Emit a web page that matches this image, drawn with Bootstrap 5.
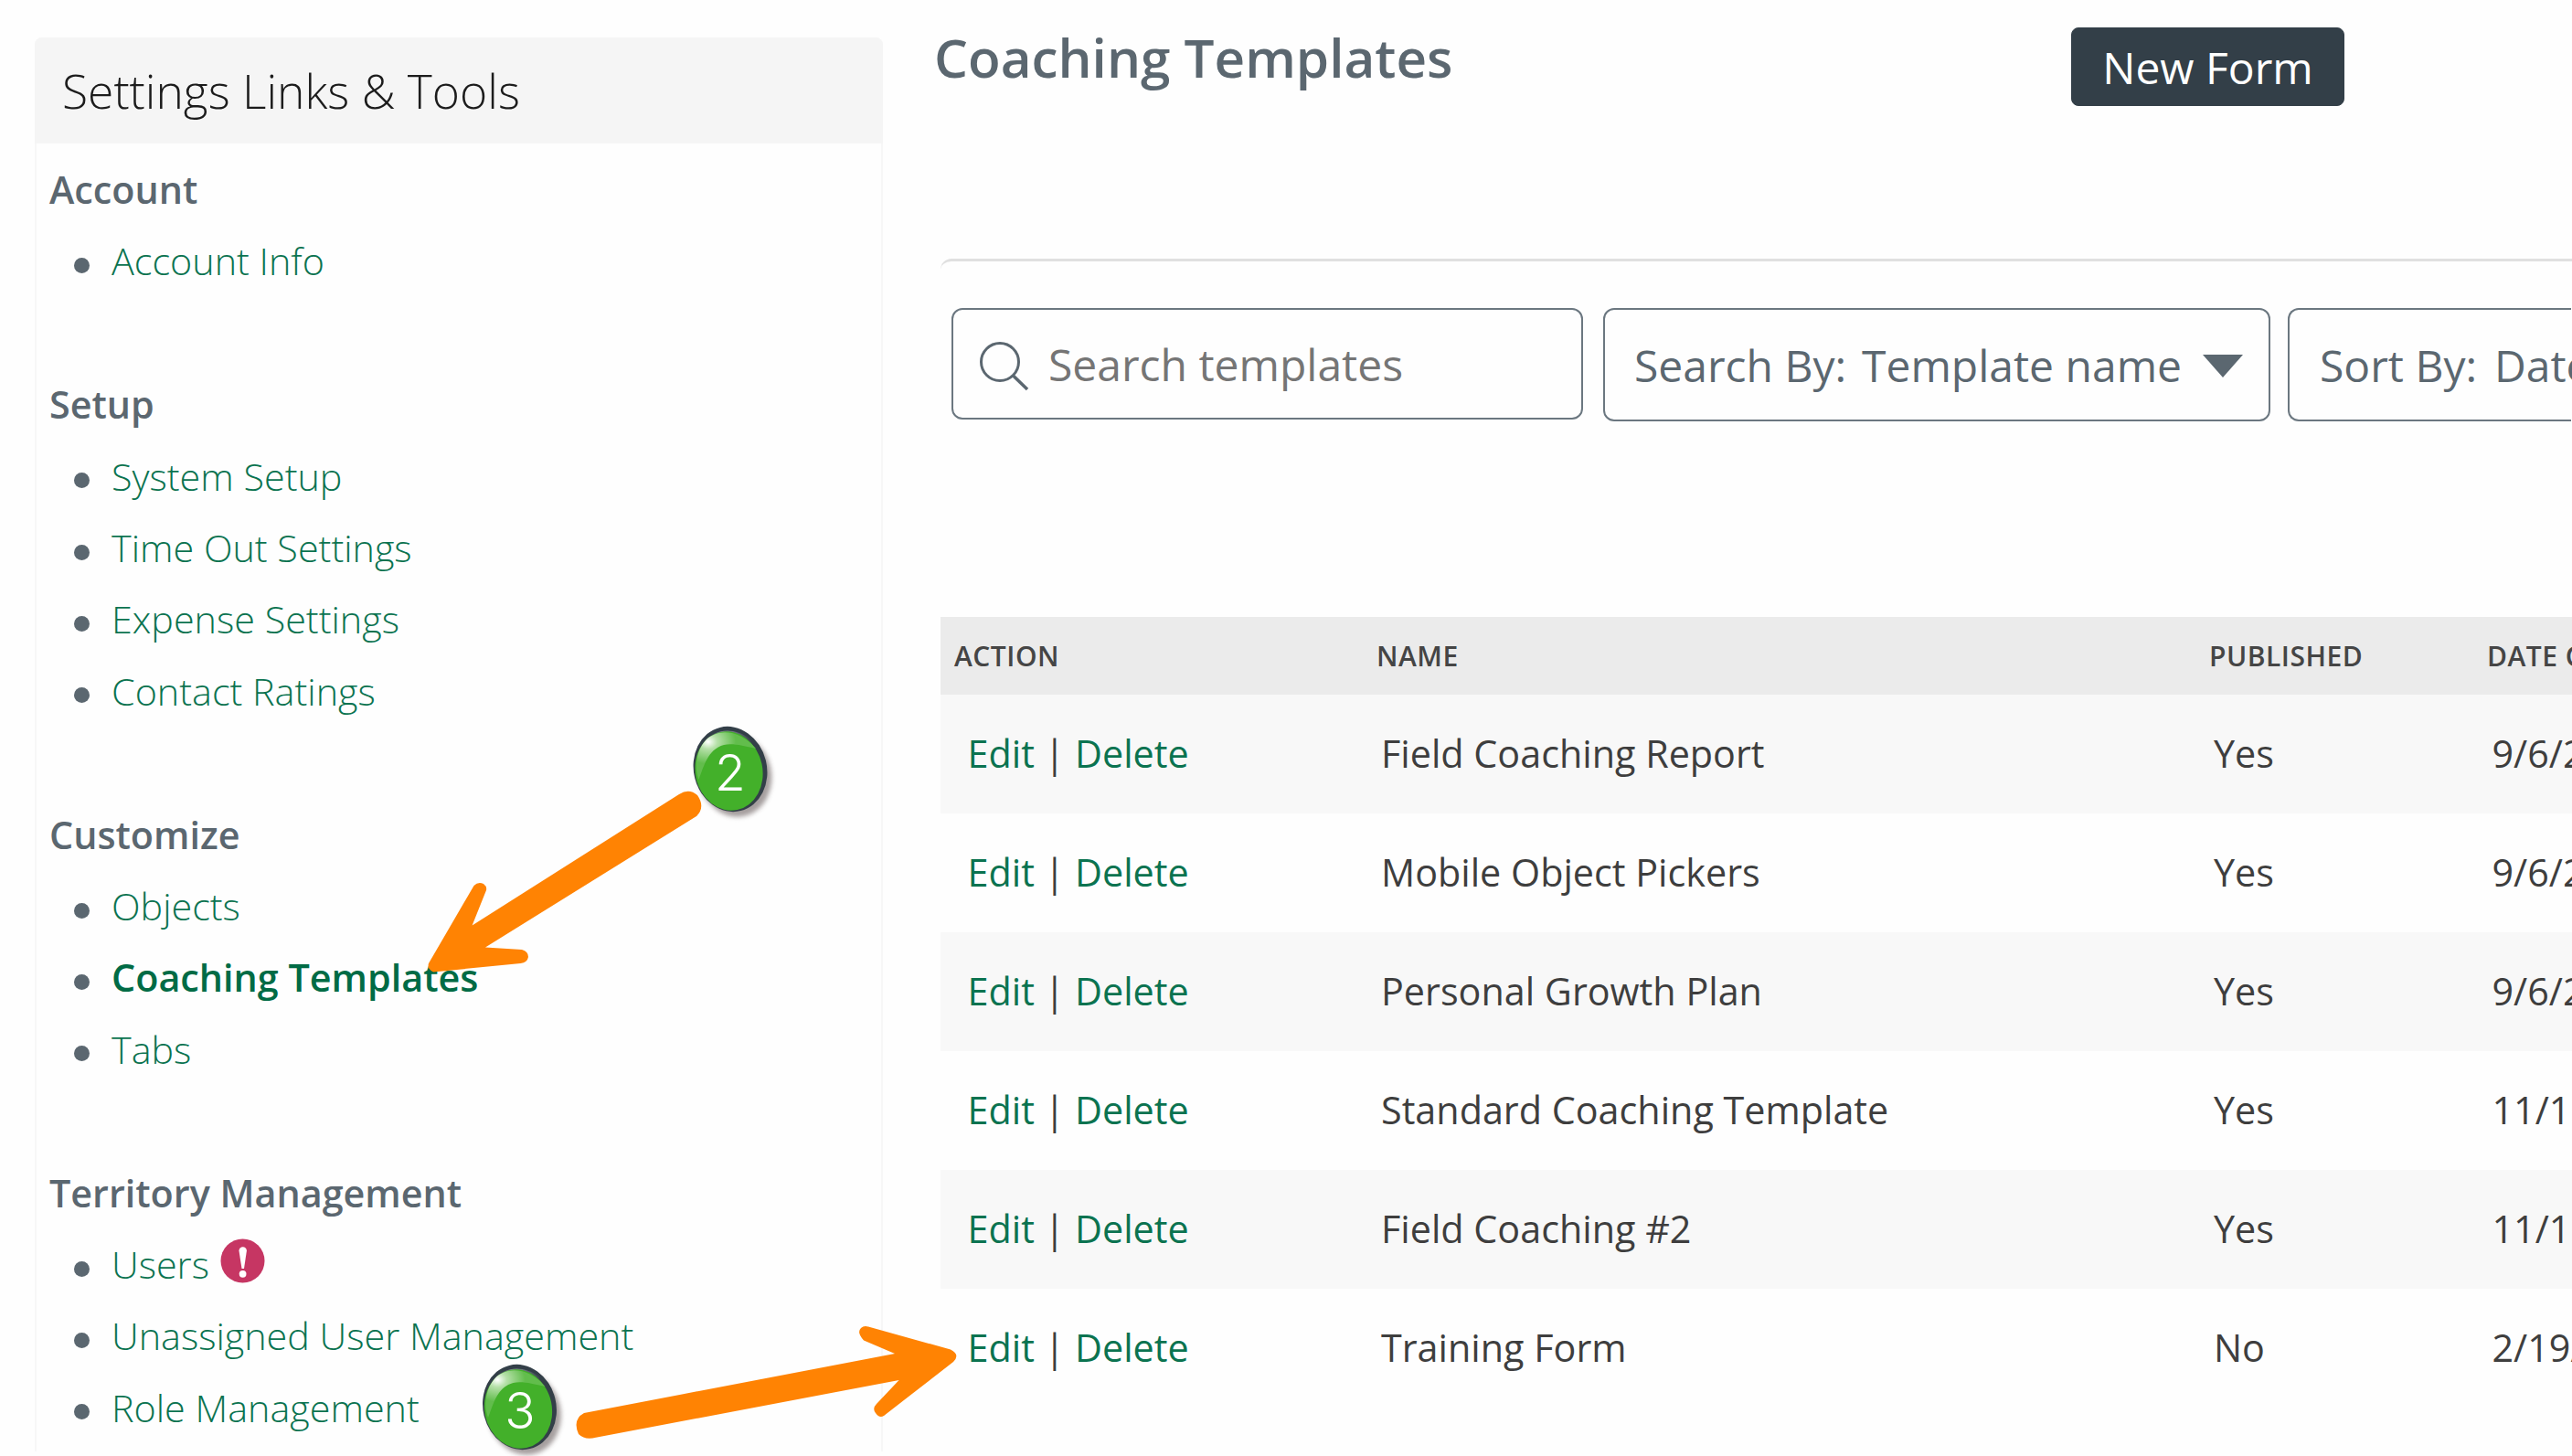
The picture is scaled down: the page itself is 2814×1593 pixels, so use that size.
<!DOCTYPE html>
<html lang="en">
<head>
<meta charset="utf-8">
<title>Coaching Templates</title>
<link href="https://cdn.jsdelivr.net/npm/bootstrap@5.3.0/dist/css/bootstrap.min.css" rel="stylesheet">
<script src="https://cdn.jsdelivr.net/npm/bootstrap@5.3.0/dist/js/bootstrap.bundle.min.js"></script>
<style>
body{font-family:"Open Sans","Noto Sans",sans-serif;background:#fefefe;color:#3e3e3e;width:2814px;height:1593px;overflow:hidden;position:relative}
a{text-decoration:none;color:#0b7350}
.side-panel{width:928px;height:1547px;margin:41px 63px 0 38px;border:2px solid #f7f7f7;border-bottom:0;border-radius:8px 8px 0 0}
.side-head{height:116px;margin:-2px -2px 0;padding-left:30px;background:#f5f5f5;color:#1c1c1c;font-size:51.5px;font-weight:300;line-height:117px;border-radius:8px 8px 0 0}
.side-body{padding:11px 0 0 14px;font-size:41.3px;line-height:78.4px}
.side-body h2{font-size:41.3px;font-weight:600;line-height:78.4px;margin:0;color:#5b6770}
.side-body ul{list-style:none;margin:0 0 78.4px;padding:0}
.side-body li{height:78.4px;padding-left:27px}
.side-body li::before{content:"";width:17px;height:17px;border-radius:50%;background:#5b6770;margin:10px 24px 0 0}
.side-body a{font-weight:300}
.side-body a.current{font-weight:600;color:#006b45}
.alert-dot{margin:-7px 0 0 12px}
.main-pane{width:1785px;overflow:hidden;margin-left:-10px;padding-left:10px;box-sizing:content-box}
.main-top{height:283px}
.main-top h1{font-size:58.4px;font-weight:600;color:#5b6770;line-height:80px;margin:23px 0 0 -7px;width:1244px}
.btn-new{--bs-btn-bg:#333f48;--bs-btn-color:#fff;--bs-btn-border-color:#333f48;width:299px;height:86px;margin-top:30px;border-radius:8px;font-size:48px;line-height:81px;padding:0}
.tools{border-top:3px solid #e0e0e0;border-top-left-radius:12px;height:392px;padding:51px 0 0 12px}
.tool-box{border:2px solid #6b7780;border-radius:12px;height:124px;font-size:48px;line-height:122px;padding-top:1px;color:#5b6770;background:#fefefe}
.tool-search{width:691px;height:122px;margin-right:22px;padding:1px 0 0 28px;color:#757575;line-height:120px}
.tool-search svg{margin:3px 21px 0 0}
.tool-by{width:730px;margin-right:19px;padding-left:32px}
.tool-sort{width:310px;padding-left:33px;border-right:0;border-radius:12px 0 0 12px}
.lbl-by{width:249px}.lbl-sort{width:191px}
.caret-icon{margin:2px 0 0 23px}
.t-head,.t-row{width:1785px}
.t-head>div,.t-row>div{flex-shrink:0}
.t-head{height:85px;background:#ebebeb;color:#454545;font-size:30px;font-weight:600;letter-spacing:.5px;line-height:85px;padding-left:15px}
.t-row{height:130px;font-size:41.3px;line-height:128px;padding-left:29.5px}
.t-row:nth-child(even){background:#f8f8f8}
.c-act{width:462px}.c-name{width:911px}.c-pub{width:304px}
.t-row .c-act{width:452.5px}.t-row .c-name{width:911px}.t-row .c-pub{width:304.500px}
.marks{left:0;top:0;pointer-events:none}
</style>
</head>
<body class="d-flex align-items-start">
<aside class="side-panel flex-shrink-0">
<div class="side-head">Settings Links &amp; Tools</div>
<nav class="side-body text-nowrap">
<h2>Account</h2>
<ul><li class="d-flex align-items-center"><a href="#">Account Info</a></li></ul>
<h2>Setup</h2>
<ul>
<li class="d-flex align-items-center"><a href="#">System Setup</a></li>
<li class="d-flex align-items-center"><a href="#">Time Out Settings</a></li>
<li class="d-flex align-items-center"><a href="#">Expense Settings</a></li>
<li class="d-flex align-items-center"><a href="#">Contact Ratings</a></li>
</ul>
<h2>Customize</h2>
<ul>
<li class="d-flex align-items-center"><a href="#">Objects</a></li>
<li class="d-flex align-items-center"><a href="#" class="current">Coaching Templates</a></li>
<li class="d-flex align-items-center"><a href="#">Tabs</a></li>
</ul>
<h2>Territory Management</h2>
<ul class="mb-0">
<li class="d-flex align-items-center"><a href="#">Users</a>
<svg class="alert-dot" width="49" height="49" viewBox="0 0 49 49"><circle cx="24.5" cy="24.5" r="24" fill="#c63663"/><path d="M20.5 13.5a4.2 4.2 0 0 1 8.400 0L26 33h-2.500z" fill="#fff"/><circle cx="24.600" cy="38.800" r="3.900" fill="#fff"/></svg></li>
<li class="d-flex align-items-center"><a href="#">Unassigned User Management</a></li>
<li class="d-flex align-items-center"><a href="#">Role Management</a></li>
</ul>
</nav>
</aside>
<main class="main-pane text-nowrap flex-shrink-0">
<div class="main-top d-flex align-items-start"><h1>Coaching Templates</h1><button class="btn btn-new">New Form</button></div>
<div class="tools d-flex align-items-start">
<div class="tool-box tool-search d-flex align-items-center flex-shrink-0">
<svg width="55" height="55" viewBox="0 0 55 55" fill="none" stroke="#5b6770" stroke-width="3"><circle cx="23" cy="23" r="20.500"/><path d="M37.500 38L53 53" stroke-width="3.500"/></svg>
<span>Search templates</span></div>
<div class="tool-box tool-by d-flex align-items-center flex-shrink-0"><span class="lbl-by flex-shrink-0">Search By:</span><span>Template name</span>
<svg class="caret-icon" width="44" height="25" viewBox="0 0 44 25"><path d="M0 0h44L22 25z" fill="#5b6770"/></svg></div>
<div class="tool-box tool-sort d-flex align-items-center flex-shrink-0"><span class="lbl-sort flex-shrink-0">Sort By:</span><span>Date</span></div>
</div>
<div>
<div class="t-head d-flex"><div class="c-act">ACTION</div><div class="c-name">NAME</div><div class="c-pub">PUBLISHED</div><div>DATE C</div></div>
<div class="t-row d-flex"><div class="c-act"><a href="#">Edit</a> | <a href="#">Delete</a></div><div class="c-name">Field Coaching Report</div><div class="c-pub">Yes</div><div>9/6/2</div></div>
<div class="t-row d-flex"><div class="c-act"><a href="#">Edit</a> | <a href="#">Delete</a></div><div class="c-name">Mobile Object Pickers</div><div class="c-pub">Yes</div><div>9/6/2</div></div>
<div class="t-row d-flex"><div class="c-act"><a href="#">Edit</a> | <a href="#">Delete</a></div><div class="c-name">Personal Growth Plan</div><div class="c-pub">Yes</div><div>9/6/2</div></div>
<div class="t-row d-flex"><div class="c-act"><a href="#">Edit</a> | <a href="#">Delete</a></div><div class="c-name">Standard Coaching Template</div><div class="c-pub">Yes</div><div>11/1</div></div>
<div class="t-row d-flex"><div class="c-act"><a href="#">Edit</a> | <a href="#">Delete</a></div><div class="c-name">Field Coaching #2</div><div class="c-pub">Yes</div><div>11/1</div></div>
<div class="t-row d-flex"><div class="c-act"><a href="#">Edit</a> | <a href="#">Delete</a></div><div class="c-name">Training Form</div><div class="c-pub">No</div><div>2/19/</div></div>
</div>
</main>
<svg class="marks position-absolute" width="2814" height="1593" viewBox="0 0 2814 1593">
<defs>
<radialGradient id="shine" cx="0.2" cy="0.2" r="0.62"><stop offset="0" stop-color="#fff"/><stop offset="0.25" stop-color="#b5e0a8"/><stop offset="0.75" stop-color="#62bd4c"/></radialGradient>
<linearGradient id="rim" x1="0" y1="0" x2="1" y2="0"><stop offset="0" stop-color="#333f48"/><stop offset="0.4" stop-color="#8a9198"/><stop offset="1" stop-color="#333f48"/></linearGradient>
<filter id="soft" x="-20%" y="-20%" width="140%" height="140%"><feGaussianBlur stdDeviation="2.500"/></filter>
<g id="ball">
<ellipse cx="46" cy="53" rx="40" ry="46" transform="rotate(-14 46 53)" fill="#6b5f5f" opacity="0.6" filter="url(#soft)"/>
<ellipse cx="41" cy="46.500" rx="40" ry="47" transform="rotate(-14 41 46.500)" fill="#333f48"/>
<path d="M12 17C24 2 45 0 62 13L66 22L40 8Z" fill="url(#rim)"/>
<ellipse cx="39.500" cy="48.500" rx="36.800" ry="43.500" transform="rotate(-12 39.500 48.500)" fill="#43b02a"/>
<path d="M6.500 58C1 44 4 26 14 15C28 1 52 4 69 24C55 21 44 18 34 20C16 25 12 44 6.500 58Z" fill="url(#shine)"/>
</g>
</defs>
<g fill="#ff8303">
<path d="M743 869Q754 862 763 870Q772 883 762 893L531 1036.500L571 1039Q578 1041 578 1047Q577 1053 569.500 1054L474 1063.500Q467 1060 469 1054L518.500 969Q523 964.500 529 967Q533 970 532 974L516.600 1012.500Z"/>
<path d="M652 1572.700Q640 1576 633 1569Q626 1553 639 1546L979 1481L945 1466.500Q937 1458 942 1453Q945 1450 950 1451.500L1040 1476.500Q1051 1482 1043 1490L967 1549Q962 1552 958 1546Q954 1541 959 1536L983.600 1510Z"/>
</g>
<use href="#ball" x="758" y="795"/>
<use href="#ball" x="527.500" y="1493"/>
<g font-family="Inter, 'Liberation Sans', sans-serif" font-weight="300" font-size="55" fill="#fff" text-anchor="middle"><text x="799" y="865">2</text><text x="569" y="1563">3</text></g>
</svg>
</body>
</html>
